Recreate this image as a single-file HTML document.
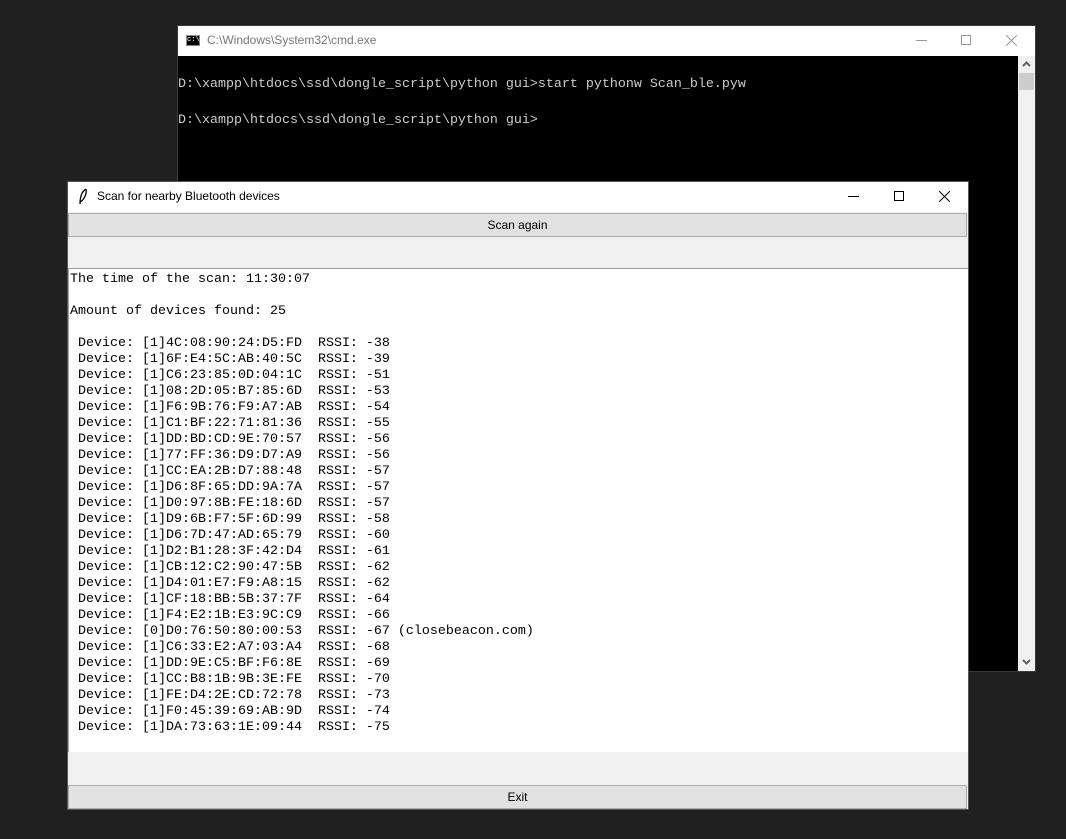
<!DOCTYPE html>
<html><head><style>
*{margin:0;padding:0;box-sizing:border-box}
body{width:1066px;height:839px;background:#202020;position:relative;overflow:hidden;font-family:"Liberation Sans",sans-serif}
.abs{position:absolute}
.mono{font-family:"Liberation Mono",monospace;font-size:13.33px;white-space:pre}
</style></head><body>
<!-- cmd window -->
<div class="abs" style="left:177px;top:25px;width:859px;height:647px;background:#3a3a3a"></div>
<div class="abs" style="left:178px;top:26px;width:857px;height:30px;background:#fff"></div>
<div class="abs" style="left:186px;top:35px;width:14px;height:11px;background:#000;border:1px solid #888;color:#fff;font-size:7px;line-height:9px;font-family:'Liberation Mono',monospace">c:\</div>
<div class="abs" style="left:207px;top:33px;font-size:12px;color:#777">C:\Windows\System32\cmd.exe</div>
<div class="abs" style="left:916px;top:40px;width:11px;height:1px;background:#999"></div>
<div class="abs" style="left:961px;top:35px;width:10px;height:10px;border:1px solid #999"></div>
<svg class="abs" style="left:1006px;top:35px" width="11" height="11"><path d="M0 0L11 11M11 0L0 11" stroke="#999" stroke-width="1"/></svg>
<div class="abs" style="left:178px;top:56px;width:840px;height:615px;background:#000"></div>
<div class="abs" style="left:1018px;top:56px;width:17px;height:615px;background:#f0f0f0"></div>
<div class="abs" style="left:1019px;top:73px;width:15px;height:17px;background:#cdcdcd"></div>
<svg class="abs" style="left:1022px;top:61px" width="9" height="6"><path d="M1 5L4.5 1.5L8 5" stroke="#606060" stroke-width="2" fill="none"/></svg>
<svg class="abs" style="left:1022px;top:659px" width="9" height="6"><path d="M1 1L4.5 4.5L8 1" stroke="#606060" stroke-width="2" fill="none"/></svg>
<div class="abs mono" style="left:178px;top:77px;color:#ccc;line-height:16px">D:\xampp\htdocs\ssd\dongle_script\python gui>start pythonw Scan_ble.pyw</div>
<div class="abs mono" style="left:178px;top:113px;color:#ccc;line-height:16px">D:\xampp\htdocs\ssd\dongle_script\python gui></div>

<!-- tk window -->
<div class="abs" style="left:67px;top:181px;width:902px;height:629px;background:#555"></div>
<div class="abs" style="left:68px;top:182px;width:900px;height:627px;background:#f0f0f0"></div>
<div class="abs" style="left:68px;top:182px;width:900px;height:30px;background:#fff"></div>
<svg class="abs" style="left:78px;top:188px" width="10" height="17"><path d="M8 1C3 4 2 10 2 16M8 1C9 6 6 12 2 14" stroke="#000" stroke-width="1.3" fill="none"/></svg>
<div class="abs" style="left:97px;top:189px;font-size:12px;color:#000">Scan for nearby Bluetooth devices</div>
<div class="abs" style="left:848px;top:196px;width:11px;height:1px;background:#000"></div>
<div class="abs" style="left:894px;top:191px;width:10px;height:10px;border:1px solid #000"></div>
<svg class="abs" style="left:939px;top:191px" width="11" height="11"><path d="M0 0L11 11M11 0L0 11" stroke="#000" stroke-width="1"/></svg>
<div class="abs" style="left:68px;top:213px;width:899px;height:24px;background:#e1e1e1;border:1px solid #adadad;font-size:12px;text-align:center;line-height:22px">Scan again</div>
<div class="abs" style="left:68px;top:268px;width:900px;height:484px;background:#fff;border-top:1px solid #a0a0a0;border-left:1px solid #a0a0a0"></div>
<div class="abs mono" style="left:70px;top:272px;line-height:16px;color:#000">The time of the scan: 11:30:07

Amount of devices found: 25

 Device: [1]4C:08:90:24:D5:FD  RSSI: -38
 Device: [1]6F:E4:5C:AB:40:5C  RSSI: -39
 Device: [1]C6:23:85:0D:04:1C  RSSI: -51
 Device: [1]08:2D:05:B7:85:6D  RSSI: -53
 Device: [1]F6:9B:76:F9:A7:AB  RSSI: -54
 Device: [1]C1:BF:22:71:81:36  RSSI: -55
 Device: [1]DD:BD:CD:9E:70:57  RSSI: -56
 Device: [1]77:FF:36:D9:D7:A9  RSSI: -56
 Device: [1]CC:EA:2B:D7:88:48  RSSI: -57
 Device: [1]D6:8F:65:DD:9A:7A  RSSI: -57
 Device: [1]D0:97:8B:FE:18:6D  RSSI: -57
 Device: [1]D9:6B:F7:5F:6D:99  RSSI: -58
 Device: [1]D6:7D:47:AD:65:79  RSSI: -60
 Device: [1]D2:B1:28:3F:42:D4  RSSI: -61
 Device: [1]CB:12:C2:90:47:5B  RSSI: -62
 Device: [1]D4:01:E7:F9:A8:15  RSSI: -62
 Device: [1]CF:18:BB:5B:37:7F  RSSI: -64
 Device: [1]F4:E2:1B:E3:9C:C9  RSSI: -66
 Device: [0]D0:76:50:80:00:53  RSSI: -67 (closebeacon.com)
 Device: [1]C6:33:E2:A7:03:A4  RSSI: -68
 Device: [1]DD:9E:C5:BF:F6:8E  RSSI: -69
 Device: [1]CC:B8:1B:9B:3E:FE  RSSI: -70
 Device: [1]FE:D4:2E:CD:72:78  RSSI: -73
 Device: [1]F0:45:39:69:AB:9D  RSSI: -74
 Device: [1]DA:73:63:1E:09:44  RSSI: -75</div>
<div class="abs" style="left:68px;top:785px;width:899px;height:24px;background:#e1e1e1;border:1px solid #adadad;font-size:12px;text-align:center;line-height:22px">Exit</div>
</body></html>
